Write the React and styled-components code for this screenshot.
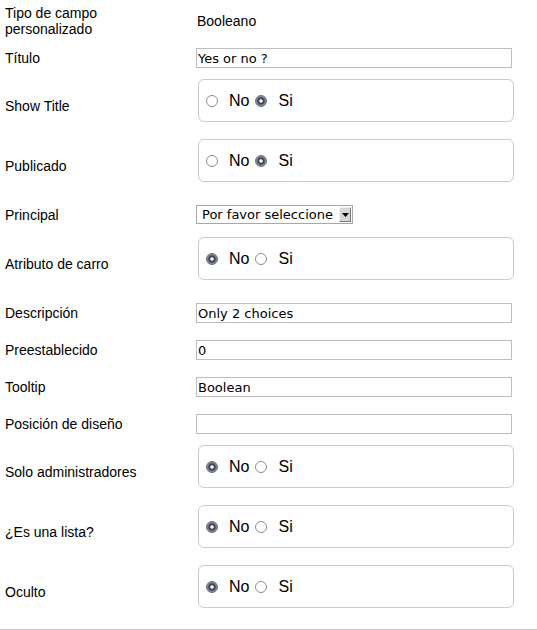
import React from 'react';
import styled, { createGlobalStyle } from 'styled-components';

const GlobalStyle = createGlobalStyle`
  body {
    margin: 0;
    background: #fff;
    color: #000;
    font-family: "Liberation Sans", Arial, sans-serif;
    font-size: 14px;
  }
`;

const FormContainer = styled.div`
  padding: 3px 0 0 5px;
`;

const Row = styled.div`
  display: grid;
  grid-template-columns: 191px 1fr;
  align-items: center;
  padding: 2px 0;
`;

const Label = styled.div`
  line-height: 16px;
`;

const StaticValue = styled.div`
  line-height: 16px;
  padding-left: 1px;
`;

const TextInput = styled.input`
  display: block;
  width: 316px;
  height: 20px;
  box-sizing: border-box;
  margin: 7px 0 6px;
  padding: 0 1px;
  border: 1px solid #bdbdbd;
  font-family: "DejaVu Sans", Verdana, sans-serif;
  font-size: 13px;
  color: #000;
  outline: none;
`;

const SelectBox = styled.div`
  display: flex;
  width: 157px;
  height: 19px;
  box-sizing: border-box;
  margin: 7px 0 8px;
  border: 1px solid #a8a8a8;
  background: #fff;
`;

const NativeSelect = styled.select`
  flex: 1;
  appearance: none;
  border: none;
  background: transparent;
  padding: 0 0 0 5px;
  font-family: "DejaVu Sans", Verdana, sans-serif;
  font-size: 13px;
  color: #000;
  outline: none;
`;

const ArrowButton = styled.span`
  width: 10px;
  margin: 1px 1px 1px 0;
  display: flex;
  align-items: center;
  justify-content: center;
  background: #d6d6d6;
  border-top: 1px solid #f4f4f4;
  border-left: 1px solid #f4f4f4;
  border-right: 1px solid #7a7a7a;
  border-bottom: 1px solid #7a7a7a;
`;

const RadioFieldset = styled.fieldset`
  display: flex;
  align-items: center;
  gap: 6px;
  width: 316px;
  height: 43px;
  box-sizing: border-box;
  margin: 1px 0 12px 2px;
  padding: 0 0 0 7px;
  border: 1px solid #cccccc;
  border-radius: 6px;
  font-size: 16px;
`;

const Option = styled.label`
  display: inline-flex;
  align-items: center;
  gap: 11px;
  line-height: 18px;
`;

const Radio = styled.input.attrs({ type: 'radio' })`
  appearance: none;
  width: 12px;
  height: 12px;
  margin: 0;
  border-radius: 50%;
  box-sizing: border-box;
  border: 1px solid #8c8c8c;
  background: #fff;
  &:checked {
    border: 1px solid #6b717c;
    background: radial-gradient(circle, #f2f2f2 0 1.3px, #3f4552 2.2px 3px, #6f7582 4px, #9ba0a8 5.5px);
  }
`;

const Divider = styled.div`
  margin-top: 7px;
  border-top: 1px solid #cccccc;
`;

const YesNo = ({ name, value }) => (
  <RadioFieldset>
    <Option>
      <Radio name={name} defaultChecked={value === 'no'} />
      No
    </Option>
    <Option>
      <Radio name={name} defaultChecked={value === 'si'} />
      Si
    </Option>
  </RadioFieldset>
);

const App = () => {
  return (
    <>
      <GlobalStyle />
      <FormContainer>
        <Row>
          <Label>Tipo de campo<br />personalizado</Label>
          <StaticValue>Booleano</StaticValue>
        </Row>
        <Row>
          <Label>Título</Label>
          <TextInput defaultValue="Yes or no ?" />
        </Row>
        <Row>
          <Label>Show Title</Label>
          <YesNo name="show_title" value="si" />
        </Row>
        <Row>
          <Label>Publicado</Label>
          <YesNo name="published" value="si" />
        </Row>
        <Row>
          <Label>Principal</Label>
          <SelectBox>
            <NativeSelect defaultValue="">
              <option value="">Por favor seleccione</option>
            </NativeSelect>
            <ArrowButton>
              <svg width="7" height="4" viewBox="0 0 7 4">
                <path d="M0 0H7L3.5 4Z" fill="#000" />
              </svg>
            </ArrowButton>
          </SelectBox>
        </Row>
        <Row>
          <Label>Atributo de carro</Label>
          <YesNo name="cart_attribute" value="no" />
        </Row>
        <Row>
          <Label>Descripción</Label>
          <TextInput defaultValue="Only 2 choices" />
        </Row>
        <Row>
          <Label>Preestablecido</Label>
          <TextInput defaultValue="0" />
        </Row>
        <Row>
          <Label>Tooltip</Label>
          <TextInput defaultValue="Boolean" />
        </Row>
        <Row>
          <Label>Posición de diseño</Label>
          <TextInput defaultValue="" />
        </Row>
        <Row>
          <Label>Solo administradores</Label>
          <YesNo name="admin_only" value="no" />
        </Row>
        <Row>
          <Label>¿Es una lista?</Label>
          <YesNo name="is_list" value="no" />
        </Row>
        <Row>
          <Label>Oculto</Label>
          <YesNo name="hidden" value="no" />
        </Row>
      </FormContainer>
      <Divider />
    </>
  );
};

export default App;
